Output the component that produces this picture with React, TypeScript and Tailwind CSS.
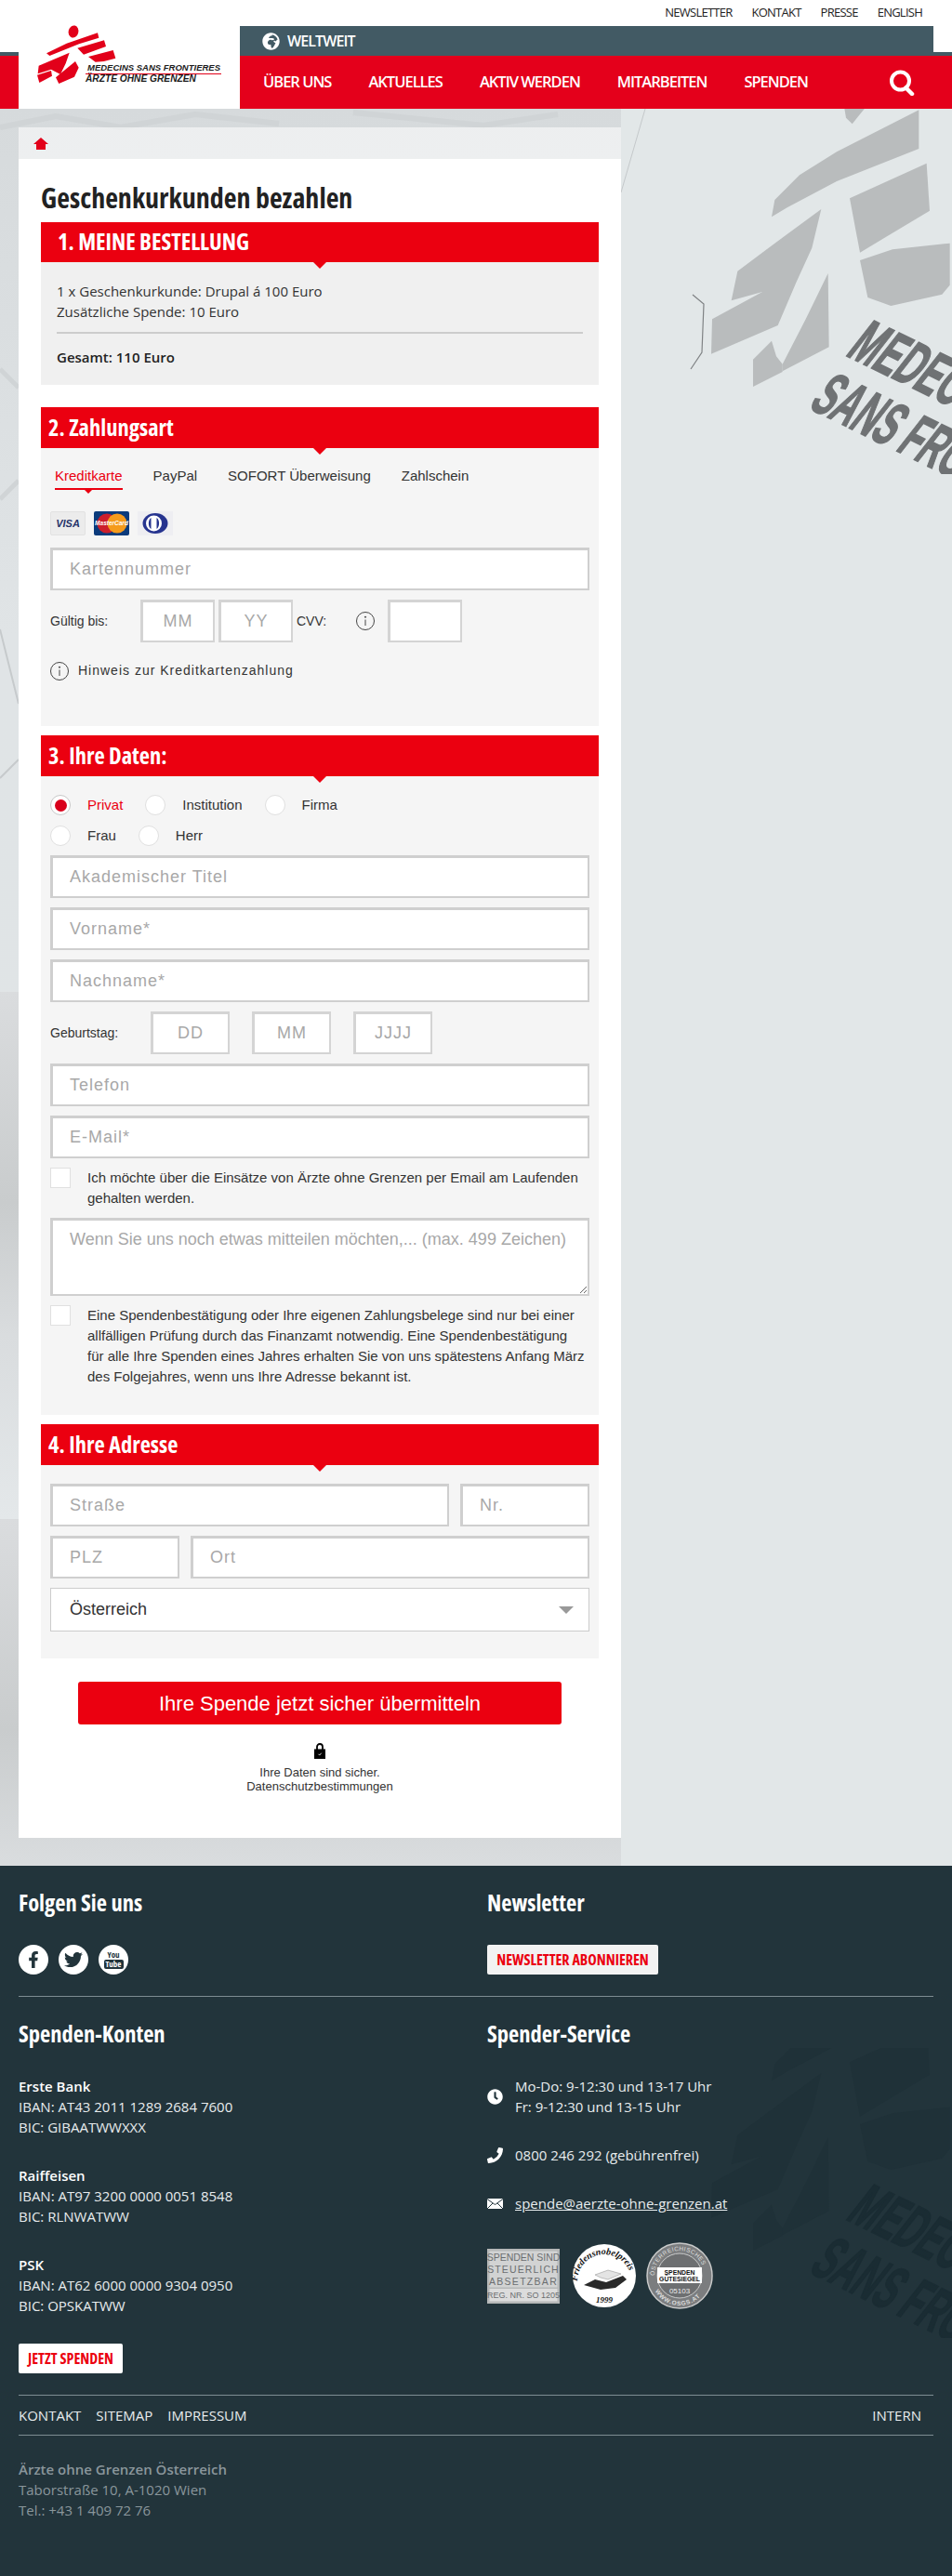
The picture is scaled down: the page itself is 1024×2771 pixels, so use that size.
import { FaClock, FaFacebookF, FaGlobeAfrica, FaPhoneAlt, FaTwitter } from "react-icons/fa"

const navItems = ["ÜBER UNS", "AKTUELLES", "AKTIV WERDEN", "MITARBEITEN", "SPENDEN"]
const topLinks = ["NEWSLETTER", "KONTAKT", "PRESSE", "ENGLISH"]
const banks = [
	{ name: "Erste Bank", iban: "AT43 2011 1289 2684 7600", bic: "GIBAATWWXXX" },
	{ name: "Raiffeisen", iban: "AT97 3200 0000 0051 8548", bic: "RLNWATWW" },
	{ name: "PSK", iban: "AT62 6000 0000 9304 0950", bic: "OPSKATWW" },
]

const Logo = () => (
	<svg viewBox="0 0 714 270" className="absolute left-0 top-0 h-[90px] w-[238px]">
		<g fill="#e2001a" transform="translate(-60 0)">
			<ellipse cx="237" cy="102" rx="16" ry="20" transform="rotate(15 237 102)" />
			<path d="M150 172 L215 140 L315 106 L319 122 L255 142 L160 180 Z" />
			<path d="M250 155 L336 130 L342 150 L270 176 Z" />
			<path d="M285 183 L365 162 L373 188 L335 198 L308 200 Z" />
			<path d="M125 212 L224 170 L212 205 L195 240 L165 224 L122 238 Z" />
			<path d="M120 242 L165 228 L168 245 L127 267 Z" />
			<path d="M180 250 L243 198 L254 218 L240 248 L190 270 Z" />
		</g>
	</svg>
)

const Watermark = ({ shape, letters }: { shape: string; letters: string }) => (
	<svg viewBox="0 0 1092 1200" className="absolute left-[660px] h-[400px] w-[364px]">
		<g fill={shape}>
			<path d="M745 20 L810 20 L770 70 L750 50 Z" />
			<path d="M985 25 L985 150 L720 255 L560 340 L510 370 L520 315 L600 235 L720 160 Z" />
			<path d="M762 310 L1010 197 L1020 350 L795 485 Z" />
			<path d="M795 510 L900 475 L1085 455 L1085 590 L1060 620 L895 657 L820 630 Z" />
			<path d="M670 345 L640 470 L590 580 L530 720 L315 812 L318 700 L480 612 L380 640 L400 545 L500 470 Z" />
			<path d="M450 830 L510 770 L525 820 L545 845 L545 870 L450 918 Z" />
			<path d="M692 552 L695 790 L545 868 L545 845 L620 700 Z" />
		</g>
		<g fill={letters} stroke={letters} strokeWidth="5" fontFamily="Liberation Sans" fontWeight="700" fontSize="205">
			<text transform="translate(745 815) rotate(26) skewX(-12) scale(0.52 1)">MEDECINS</text>
			<text transform="translate(625 985) rotate(26) skewX(-12) scale(0.5 1)">SANS FRONTIERES</text>
		</g>
	</svg>
)

const Section = ({ title, className, headClass, children }: { title: string; className: string; headClass: string; children: React.ReactNode }) => (
	<section className={className}>
		<div className={`relative flex items-center bg-[#eb0010] font-['Open_Sans'] text-[24.5px] font-bold text-white font-stretch-condensed ${headClass}`}>
			{title}
			<span className="absolute left-[293px] top-full border-x-[7px] border-t-[7px] border-x-transparent border-t-[#eb0010]" />
		</div>
		{children}
	</section>
)

const Field = ({ placeholder, className = "w-full" }: { placeholder: string; className?: string }) => (
	<input
		placeholder={placeholder}
		className={`h-[46px] border-2 border-t-[3px] border-l-[3px] border-[#cfcfcf] bg-white px-[18px] text-[18px] tracking-[1px] outline-none placeholder:text-[#a8a8a8] ${className}`}
	/>
)

const SmallField = ({ placeholder, className }: { placeholder: string; className: string }) => (
	<input
		placeholder={placeholder}
		className={`h-[46px] border-2 border-t-[3px] border-l-[3px] border-[#d4d4d4] bg-white text-center text-[18px] tracking-[1px] outline-none placeholder:text-[#a8a8a8] ${className}`}
	/>
)

const Radio = ({ label, checked }: { label: string; checked?: boolean }) => (
	<div className="flex items-center">
		<span className={`flex size-[22px] items-center justify-center rounded-full border bg-white ${checked ? "border-[#c8c8c8]" : "border-[#e0e0e0]"}`}>
			{checked && <span className="size-[13px] rounded-full bg-[#d9001b]" />}
		</span>
		<span className={`ml-[18px] text-[15px] ${checked ? "text-[#eb0010]" : "text-[#333]"}`}>{label}</span>
	</div>
)

const Info = () => (
	<svg viewBox="0 0 20 20" className="size-5 shrink-0" fill="none" stroke="#444">
		<circle cx="10" cy="10" r="9.5" />
		<path d="M10 8.5V15" />
		<circle cx="10" cy="5.7" r="0.6" fill="#444" />
	</svg>
)

const Cards = () => (
	<div className="flex gap-[9px]">
		<div className="flex h-[26px] w-[38px] items-center justify-center rounded-[2px] border border-[#e2e2e2] bg-[#ececec] font-['Liberation_Sans'] text-[11px] font-bold italic text-[#27346a]">
			VISA
		</div>
		<svg viewBox="0 0 38 26" className="h-[26px] w-[38px]">
			<rect width="38" height="26" rx="2" fill="#0b3b7c" />
			<circle cx="14" cy="13" r="10.5" fill="#cc1f2c" />
			<circle cx="25" cy="13" r="10.5" fill="#f59b1c" />
			<text x="19" y="15" textAnchor="middle" fontSize="6.5" fontStyle="italic" fontWeight="700" fill="#fff" fontFamily="Liberation Sans">
				MasterCard
			</text>
		</svg>
		<svg viewBox="0 0 38 26" className="h-[26px] w-[38px]">
			<rect width="38" height="26" fill="#eeeef2" />
			<ellipse cx="19" cy="13" rx="13.5" ry="11" fill="#26348f" />
			<circle cx="17.5" cy="13" r="8.5" fill="#fff" />
			<path d="M14.5 7V19C11 17 11 9 14.5 7ZM20.5 7V19C24 17 24 9 20.5 7Z" fill="#26348f" />
		</svg>
	</div>
)

const Lock = () => (
	<svg viewBox="0 0 12 17" className="mx-auto h-[17px] w-3">
		<path d="M3 7V4a3 3 0 0 1 6 0v3" fill="none" stroke="#000" strokeWidth="1.8" />
		<rect y="6.5" width="12" height="10.5" fill="#000" />
		<path d="M4.5 11.8l1.2 1.3 2-2.4" fill="none" stroke="#fff" strokeWidth="0.8" />
	</svg>
)

const Search = () => (
	<svg viewBox="0 0 28 28" className="size-7">
		<circle cx="12.5" cy="12" r="9.5" fill="none" stroke="#fff" strokeWidth="4" />
		<path d="M18.5 19.5L25 26" stroke="#fff" strokeWidth="4.5" strokeLinecap="round" />
	</svg>
)

const Mail = () => (
	<svg viewBox="0 0 17 11" className="h-[11px] w-[17px] shrink-0">
		<rect width="17" height="11" fill="#fff" />
		<path d="M0 0.5L8.5 6.5L17 0.5M0 11L6 5M17 11L11 5" fill="none" stroke="#22343b" strokeWidth="1" />
	</svg>
)

// faint cracks of the marble behind the form
const Streaks = () => (
	<svg viewBox="0 0 1024 950" className="absolute left-0 top-0 h-[950px] w-[1024px]" fill="none">
		<path d="M694 0L668 90" stroke="#c4c8ca" />
		<path d="M0 20L60 8L130 20L210 6L300 16M380 4L520 18L600 6" stroke="#c9cdcf" strokeWidth="6" strokeOpacity="0.5" />
		<path d="M745 200L757 210L755 262L743 280" stroke="#7f8284" strokeWidth="1.2" />
		<path d="M0 560L20 640M0 720L20 700" stroke="#c6cacc" strokeWidth="2" />
		<path d="M0 280L20 300M0 420L20 400" stroke="#d0d4d6" strokeWidth="5" />
	</svg>
)

const Seals = () => (
	<div className="flex items-center">
		<svg viewBox="0 0 78 59" className="h-[59px] w-[78px] font-['Liberation_Sans']">
			<rect width="78" height="59" fill="#b6b8b8" />
			<rect x="2.5" y="2.5" width="73" height="39" fill="#d2d3d3" />
			<rect x="2.5" y="43" width="73" height="13.5" fill="#dcdcdc" />
			<g fill="#6b6e70" fontSize="10.5" textAnchor="middle">
				<text x="39" y="13">SPENDEN SIND</text>
				<text x="39" y="26" letterSpacing="1.1">STEUERLICH</text>
				<text x="39" y="39" letterSpacing="1.3">ABSETZBAR</text>
				<text x="39" y="53" fontSize="9">REG. NR. SO 1205</text>
			</g>
		</svg>
		<svg viewBox="0 0 68 68" className="ml-[14px] size-[68px] font-['Liberation_Serif']">
			<circle cx="34" cy="34" r="34" fill="#fff" />
			<path id="sealTop" d="M5 40A29 29 0 0 1 63 40" fill="none" />
			<text fontSize="10" fontStyle="italic" fontWeight="700" fill="#111">
				<textPath href="#sealTop">Friedensnobelpreis</textPath>
			</text>
			<path d="M12 44L24 38L36 41L54 34L58 38L46 47L30 49Z" fill="#2a2a2a" />
			<path d="M24 33L38 28L52 32L38 38L30 36Z" fill="#e4e4e4" stroke="#888" strokeWidth="0.5" />
			<text x="34" y="63" textAnchor="middle" fontSize="9" fontStyle="italic" fontWeight="700" fill="#111">
				1999
			</text>
		</svg>
		<svg viewBox="0 0 72 72" className="ml-[11px] size-[72px] font-['Liberation_Sans']">
			<circle cx="36" cy="36" r="35" fill="#7b7d7f" stroke="#c9caca" strokeWidth="1.5" />
			<circle cx="36" cy="36" r="24" fill="#6d6f71" stroke="#c9caca" />
			<path id="sealRingTop" d="M9 36A27 27 0 0 1 63 36" fill="none" />
			<text fontSize="6.5" fill="#ddd" letterSpacing="0.4">
				<textPath href="#sealRingTop">ÖSTERREICHISCHES</textPath>
			</text>
			<path id="sealRingBottom" d="M6 38A30 30 0 0 0 66 38" fill="none" />
			<text fontSize="6.5" fontWeight="700" fill="#ddd" letterSpacing="0.8">
				<textPath href="#sealRingBottom" startOffset="16%">WWW.OSGS.AT</textPath>
			</text>
			<rect x="12" y="27" width="48" height="17" fill="#fff" />
			<text x="36" y="34.5" textAnchor="middle" fontSize="6.8" fontWeight="700" fill="#111">SPENDEN</text>
			<text x="36" y="42" textAnchor="middle" fontSize="6.8" fontWeight="700" fill="#111">GÜTESIEGEL</text>
			<text x="36" y="55" textAnchor="middle" fontSize="8" fill="#eee">05103</text>
		</svg>
	</div>
)

const FooterHeading = ({ children }: { children: React.ReactNode }) => (
	<h3 className="text-[24.5px] font-bold leading-[28px] text-white font-stretch-condensed">{children}</h3>
)

const App = () => {
	return (
		<div className="w-[1024px] font-['Liberation_Sans',sans-serif] text-[#333]">
			<header className="relative z-10 flex h-[117px] bg-white font-['Open_Sans']">
				<div className="flex w-5 flex-col pt-[56px]">
					<div className="h-1 bg-[#425a64]" />
					<div className="flex-1 bg-[#e4001b]" />
				</div>
				<div className="relative w-[238px]">
					<Logo />
					<div className="absolute left-[72px] top-[68px] w-[146px] font-['Liberation_Sans'] font-bold italic leading-none text-[#1c1c1c]">
						<div className="border-b border-[#e2001a] pb-[1px] pl-[2px] text-[9.5px] whitespace-nowrap">MEDECINS SANS FRONTIERES</div>
						<div className="text-[10.2px] whitespace-nowrap">ÄRZTE OHNE GRENZEN</div>
					</div>
				</div>
				<div className="flex flex-1 flex-col">
					<nav className="flex h-7 items-center justify-end gap-[21px] pr-8 text-[13px] tracking-[-0.75px] text-[#222]">
						{topLinks.map(link => (
							<span key={link}>{link}</span>
						))}
					</nav>
					<div className="flex h-8">
						<div className="flex w-[746px] items-center gap-2 bg-[#425a64] pl-6 text-[16px] font-semibold tracking-[-0.9px] text-white">
							<FaGlobeAfrica size={19} />
							WELTWEIT
						</div>
						<div className="flex-1 pt-7">
							<div className="h-1 bg-[#425a64]" />
						</div>
					</div>
					<nav className="flex h-[57px] items-center gap-[40px] bg-[#e4001b] pl-[25px] pr-10 text-[16.5px] font-semibold tracking-[-1px] text-white">
						{navItems.map(item => (
							<span key={item}>{item}</span>
						))}
						<span className="ml-auto">
							<Search />
						</span>
					</nav>
				</div>
			</header>

			<div className="relative bg-[#e2e7e8]">
				<div className="absolute inset-y-0 left-0 w-[668px] bg-[linear-gradient(180deg,#d6dadc_0%,#e0e4e6_30%,#e0e5e6_100%)]" />
				<div className="absolute top-[950px] bottom-0 left-0 w-[668px] bg-[linear-gradient(180deg,#dadcde_0%,#c9cccd_40%,#d9dcde_65%,#e4e8ea_100%)] bg-[length:100%_567px]" />
				<Streaks />
				<div className="absolute -top-[7px] left-0 h-[400px] w-full">
					<Watermark shape="#b9bcbd" letters="#6f7274" />
				</div>

				<main className="relative ml-5 w-[648px] pt-5 pb-[30px]">
					<div className="flex h-[34px] items-center bg-white/55 pl-4">
						<svg viewBox="0 0 16 13" className="h-[13px] w-4">
							<path d="M8 0L16 7H13V13H3V7H0Z" fill="#e2001a" />
						</svg>
					</div>
					<div className="bg-white px-6 pb-[48px]">
						<h1 className="flex h-[68px] items-center pt-[14px] font-['Open_Sans'] text-[30px] font-bold text-[#222] font-stretch-condensed">
							Geschenkurkunden bezahlen
						</h1>

						<Section title="1. MEINE BESTELLUNG" className="bg-[#f0f0f0]" headClass="h-[43px] pl-[18px]">
							<div className="h-[132px] px-[17px] pt-5 font-['Open_Sans'] text-[15px] leading-[22px]">
								<p>1 x Geschenkurkunde: Drupal á 100 Euro</p>
								<p>Zusätzliche Spende: 10 Euro</p>
								<div className="mt-[11px] h-[2px] bg-[#ccc]" />
								<p className="mt-[14px] font-semibold text-[#222]">Gesamt: 110 Euro</p>
							</div>
						</Section>

						<Section title="2. Zahlungsart" className="mt-6 bg-[#f5f5f5]" headClass="h-11 pl-2">
							<div className="h-[299px] px-[10px] pt-[21px]">
								<div className="ml-[5px] flex gap-[33px] text-[15px] leading-[18px]">
									<span className="relative border-b-2 border-[#eb0010] pb-[4px] text-[#eb0010]">
										Kreditkarte
										<span className="absolute left-[30px] top-full border-x-[6px] border-t-[6px] border-x-transparent border-t-[#eb0010]" />
									</span>
									<span>PayPal</span>
									<span>SOFORT Überweisung</span>
									<span>Zahlschein</span>
								</div>
								<div className="mt-[23px]">
									<Cards />
								</div>
								<Field placeholder="Kartennummer" className="mt-[13px] w-full" />
								<div className="mt-[10px] flex items-center text-[14px]">
									<span className="w-[97px]">Gültig bis:</span>
									<SmallField placeholder="MM" className="w-[80px]" />
									<SmallField placeholder="YY" className="ml-1 w-[80px]" />
									<span className="ml-1 w-[64px]">CVV:</span>
									<Info />
									<SmallField placeholder="" className="ml-[14px] w-[80px]" />
								</div>
								<div className="mt-5 flex items-center gap-[10px] text-[14px] tracking-[1px]">
									<Info />
									Hinweis zur Kreditkartenzahlung
								</div>
							</div>
						</Section>

						<Section title="3. Ihre Daten:" className="mt-[10px] bg-[#f5f5f5]" headClass="h-11 pl-2">
							<div className="h-[687px] px-[10px] pt-5">
								<div className="flex gap-6">
									<Radio label="Privat" checked />
									<Radio label="Institution" />
									<Radio label="Firma" />
								</div>
								<div className="mt-[10px] flex gap-6">
									<Radio label="Frau" />
									<Radio label="Herr" />
								</div>
								<div className="mt-[10px] flex flex-col gap-[10px]">
									<Field placeholder="Akademischer Titel" />
									<Field placeholder="Vorname*" />
									<Field placeholder="Nachname*" />
									<div className="flex items-center gap-6 text-[14px]">
										<span className="w-[84px]">Geburtstag:</span>
										<SmallField placeholder="DD" className="w-[85px]" />
										<SmallField placeholder="MM" className="w-[85px]" />
										<SmallField placeholder="JJJJ" className="w-[85px]" />
									</div>
									<Field placeholder="Telefon" />
									<Field placeholder="E-Mail*" />
								</div>
								<div className="mt-[10px] flex gap-[18px] text-[15px] leading-[22px]">
									<span className="size-[22px] shrink-0 border border-[#e0e0e0] bg-white" />
									<p>Ich möchte über die Einsätze von Ärzte ohne Grenzen per Email am Laufenden gehalten werden.</p>
								</div>
								<textarea
									placeholder="Wenn Sie uns noch etwas mitteilen möchten,... (max. 499 Zeichen)"
									className="mt-[10px] block h-[84px] w-full border-2 border-t-[3px] border-l-[3px] border-[#cfcfcf] bg-white px-[18px] py-[7px] text-[18px] outline-none placeholder:text-[#a8a8a8]"
								/>
								<div className="mt-[10px] flex gap-[18px] pr-[4px] text-[15px] leading-[22px]">
									<span className="size-[22px] shrink-0 border border-[#e0e0e0] bg-white" />
									<p>
										Eine Spendenbestätigung oder Ihre eigenen Zahlungsbelege sind nur bei einer allfälligen Prüfung durch das Finanzamt notwendig. Eine Spendenbestätigung für alle Ihre Spenden eines Jahres erhalten Sie von uns spätestens Anfang März des Folgejahres, wenn uns Ihre Adresse bekannt ist.
									</p>
								</div>
							</div>
						</Section>

						<Section title="4. Ihre Adresse" className="mt-[10px] bg-[#f5f5f5]" headClass="h-11 pl-2">
							<div className="flex h-[208px] flex-col gap-[10px] px-[10px] pt-5">
								<div className="flex gap-3">
									<Field placeholder="Straße" className="w-[429px]" />
									<Field placeholder="Nr." className="flex-1 min-w-0" />
								</div>
								<div className="flex gap-3">
									<Field placeholder="PLZ" className="w-[139px]" />
									<Field placeholder="Ort" className="flex-1 min-w-0" />
								</div>
								<div className="flex h-[47px] items-center justify-between border border-[#ccc] bg-white pl-[20px] pr-4 text-[18px]">
									Österreich
									<span className="border-x-8 border-t-8 border-x-transparent border-t-[#999]" />
								</div>
							</div>
						</Section>

						<button className="mx-auto mt-[25px] block h-[46px] w-[520px] rounded-[3px] bg-[#eb0010] text-[22px] text-white">
							Ihre Spende jetzt sicher übermitteln
						</button>
						<div className="mt-5">
							<Lock />
						</div>
						<p className="mt-[7px] text-center text-[13px] leading-[15px]">
							Ihre Daten sind sicher.
							<br />
							Datenschutzbestimmungen
						</p>
					</div>
				</main>
			</div>

			<footer className="relative h-[764px] overflow-hidden bg-[#22343b] px-5 font-['Open_Sans'] text-[15px] leading-[22px] text-[#e8ecee]">
				<div className="absolute inset-x-0 top-[196px] h-[567px] overflow-hidden">
					<div className="absolute -top-[88px] left-0 h-[400px] w-full">
						<Watermark shape="#1f3138" letters="#1a2c33" />
					</div>
				</div>

				<div className="relative">
					<div className="flex h-[141px] border-b border-[#7d8c92] pt-[26px]">
						<div className="w-[504px]">
							<FooterHeading>Folgen Sie uns</FooterHeading>
							<div className="mt-[31px] flex gap-[11px]">
								<span className="flex size-8 items-center justify-center rounded-full bg-white text-[#22343b]">
									<FaFacebookF size={18} />
								</span>
								<span className="flex size-8 items-center justify-center rounded-full bg-white text-[#22343b]">
									<FaTwitter size={20} />
								</span>
								<span className="flex size-8 flex-col items-center justify-center rounded-full bg-white text-[9px] font-bold leading-[10px] text-[#22343b] font-stretch-condensed">
									<span>You</span>
									<span className="rounded-[2px] bg-[#22343b] px-[2px] text-white">Tube</span>
								</span>
							</div>
						</div>
						<div>
							<FooterHeading>Newsletter</FooterHeading>
							<div className="mt-[31px] flex h-8 w-[184px] items-center justify-center rounded-[2px] bg-[#f2f2f2] text-[16px] font-bold text-[#eb0010] font-stretch-condensed">
								NEWSLETTER ABONNIEREN
							</div>
						</div>
					</div>

					<div className="flex h-[428px] pt-[26px]">
						<div className="w-[504px]">
							<FooterHeading>Spenden-Konten</FooterHeading>
							<div className="mt-[31px] flex flex-col gap-[30px]">
								{banks.map(bank => (
									<p key={bank.name}>
										<span className="font-semibold text-white">{bank.name}</span>
										<br />
										IBAN: {bank.iban}
										<br />
										BIC: {bank.bic}
									</p>
								))}
							</div>
							<div className="mt-[30px] flex h-8 w-[112px] items-center justify-center rounded-[2px] bg-white text-[16px] font-bold text-[#eb0010] font-stretch-condensed">
								JETZT SPENDEN
							</div>
						</div>
						<div>
							<FooterHeading>Spender-Service</FooterHeading>
							<div className="mt-[31px] flex items-center gap-[13px]">
								<FaClock size={17} className="shrink-0 text-white" />
								<p>
									Mo-Do: 9-12:30 und 13-17 Uhr
									<br />
									Fr: 9-12:30 und 13-15 Uhr
								</p>
							</div>
							<div className="mt-[30px] flex items-center gap-[13px]">
								<FaPhoneAlt size={17} className="shrink-0 -scale-x-100 text-white" />
								<p>0800 246 292 (gebührenfrei)</p>
							</div>
							<div className="mt-[30px] flex items-center gap-[13px]">
								<Mail />
								<p className="underline">spende@aerzte-ohne-grenzen.at</p>
							</div>
							<div className="mt-[31px]">
								<Seals />
							</div>
						</div>
					</div>

					<div className="flex h-11 items-center justify-between border-y border-[#7d8c92] pr-[13px]">
						<div className="flex gap-[16px]">
							<span>KONTAKT</span>
							<span>SITEMAP</span>
							<span>IMPRESSUM</span>
						</div>
						<span>INTERN</span>
					</div>

					<p className="mt-[25px] text-[#8a969b]">
						<span className="font-semibold">Ärzte ohne Grenzen Österreich</span>
						<br />
						Taborstraße 10, A-1020 Wien
						<br />
						Tel.: +43 1 409 72 76
					</p>
				</div>
			</footer>
		</div>
	)
}

export default App
